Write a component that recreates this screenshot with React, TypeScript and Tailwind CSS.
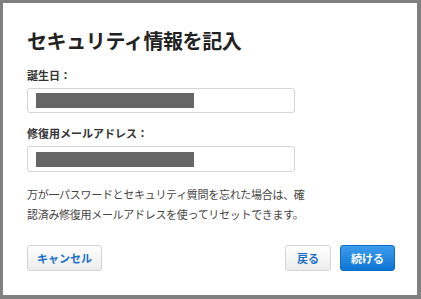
export default function App() {
  return (
    <div
      className="w-[421px] h-[299px] bg-[#808080] pt-[3px] pl-[3px]"
      style={{ fontFamily: '"Noto Sans CJK JP", "Noto Sans", sans-serif' }}
    >
      <div className="w-[414px] h-[292px] bg-white pl-[24px] pr-[22px] pt-[24px]">
        <h1 className="text-[20px] font-bold text-[#222] leading-[28px] tracking-[-0.4px]">
          セキュリティ情報を記入
        </h1>

        <label className="block mt-[12px] text-[11px] font-bold text-[#333] leading-[16px]">
          誕生日：
        </label>
        <div className="mt-[5px] w-[268px] h-[25px] border border-[#d6d6d6] rounded-[3px] flex items-center pl-[8px]">
          <div className="w-[158px] h-[15px] bg-[#666]" />
        </div>

        <label className="block mt-[12px] text-[11px] font-bold text-[#333] leading-[16px]">
          修復用メールアドレス：
        </label>
        <div className="mt-[5px] w-[268px] h-[26px] border border-[#d6d6d6] rounded-[3px] flex items-center pl-[8px]">
          <div className="w-[158px] h-[15px] bg-[#666]" />
        </div>

        <p className="mt-[12px] text-[11px] text-[#444] leading-[20px] tracking-[-0.3px]">
          万が一パスワードとセキュリティ質問を忘れた場合は、確
          <br />
          認済み修復用メールアドレスを使ってリセットできます。
        </p>

        <div className="mt-[21px] flex items-center">
          <button className="w-[75px] h-[26px] rounded-[3px] border border-[#d4d4d4] bg-gradient-to-b from-white to-[#ececec] text-[11px] font-bold text-[#1a6fc9]">
            キャンセル
          </button>
          <div className="flex-1" />
          <button className="w-[46px] h-[26px] rounded-[3px] border border-[#d4d4d4] bg-gradient-to-b from-white to-[#ececec] text-[11px] font-bold text-[#1a6fc9]">
            戻る
          </button>
          <button className="ml-[9px] w-[55px] h-[26px] rounded-[3px] border border-[#0d6fc4] bg-gradient-to-b from-[#3a9cec] to-[#0c74d4] text-[11px] font-bold text-white">
            続ける
          </button>
        </div>
      </div>
    </div>
  );
}
